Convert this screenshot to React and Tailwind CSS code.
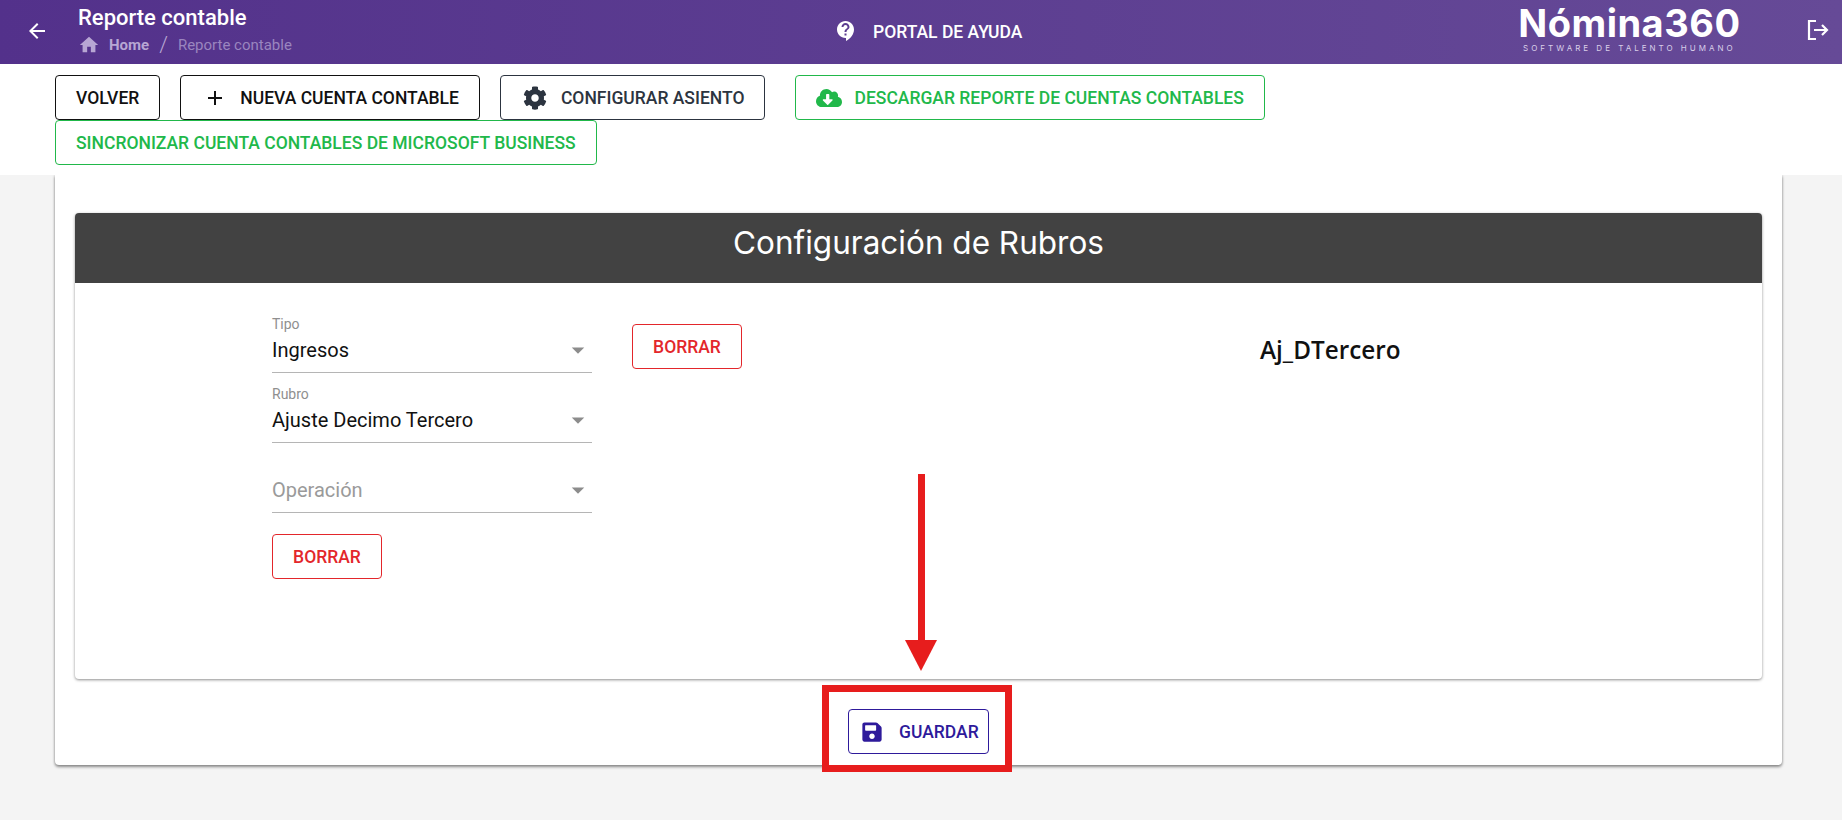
import React from "react";
import { MdArrowBack, MdHome, MdAdd, MdContactSupport, MdArrowDropDown } from "react-icons/md";
import { FaCog, FaCloudDownloadAlt, FaSave } from "react-icons/fa";

const ToolButton = ({ icon, label, className }) => (
  <button
    type="button"
    className={`flex h-[45px] items-center rounded-[4px] border px-[20px] pt-[1px] text-[17.5px] font-medium whitespace-nowrap ${className}`}
  >
    {icon}
    {label}
  </button>
);

const SelectField = ({ label, value }) => (
  <div className="relative h-[70px] w-[320px] border-b border-[#b5b5b5]">
    {label && (
      <span className="absolute top-[13px] left-0 text-[14px] leading-[16px] text-[#8f8f8f]">
        {label}
      </span>
    )}
    {value ? (
      <span className="absolute top-[34px] left-0 text-[20px] leading-[26px] text-[#111]">{value}</span>
    ) : (
      <span className="absolute top-[34px] left-0 text-[20px] leading-[26px] text-[#9a9a9a]">Operación</span>
    )}
    <MdArrowDropDown className="absolute top-[32px] right-[-1px] text-[#8c8c8c]" size={30} />
  </div>
);

const BorrarButton = ({ className }) => (
  <button
    type="button"
    className={`h-[45px] w-[110px] rounded-[4px] border border-[#e3262b] pt-[1px] text-[17.5px] font-medium text-[#e3262b] ${className}`}
  >
    BORRAR
  </button>
);

const App = () => {
  return (
    <div className="relative h-[820px] w-full overflow-hidden bg-[#f4f4f4] font-['Roboto',sans-serif]">
      <header className="flex h-[64px] items-center bg-gradient-to-r from-[#53318b] to-[#664a97] text-white">
        <MdArrowBack className="mb-[3px] ml-[25px]" size={24} />
        <div className="ml-[29px] w-[280px] self-start pt-[4px]">
          <div className="text-[22px] leading-[28px] font-medium">Reporte contable</div>
          <div className="mt-[2px] flex items-center text-[15px] leading-[20px] text-[#b7a6d3]">
            <MdHome size={22} />
            <span className="ml-[9px] font-bold">Home</span>
            <span className="mx-[10px] text-[22px] font-light">/</span>
            <span className="text-[#9a85bf]">Reporte contable</span>
          </div>
        </div>
        <div className="ml-[476px] flex items-center">
          <MdContactSupport className="mb-[3px]" size={24} />
          <span className="ml-[15px] text-[17.5px] font-medium">PORTAL DE AYUDA</span>
        </div>
        <div className="ml-[495px] w-[224px] pb-[9px] text-center">
          <div className="font-['Inter',sans-serif] text-[38px] leading-[42px] font-bold tracking-[0.5px]">Nómina360</div>
          <div className="mt-[-1px] font-['Inter',sans-serif] text-[8px] leading-[10px] tracking-[3px] text-[#d9cfe9]">
            SOFTWARE DE TALENTO HUMANO
          </div>
        </div>
        <svg className="mb-[4px] ml-[65px]" width="24" height="24" viewBox="0 0 24 24" fill="none" stroke="currentColor" strokeWidth="2.2">
          <path d="M10 3H3v18h7" />
          <path d="M8 12h13M16 7l5 5-5 5" />
        </svg>
      </header>

      <div className="relative z-10 flex h-[111px] flex-wrap content-start items-start bg-white pt-[11px] pr-[500px] pl-[55px]">
        <ToolButton label="VOLVER" className="mr-[20px] border-[#111] text-[#111]" />
        <ToolButton
          label="NUEVA CUENTA CONTABLE"
          icon={<MdAdd className="mr-[13px] ml-[2px]" size={24} />}
          className="mr-[20px] border-[#111] text-[#111]"
        />
        <ToolButton
          label="CONFIGURAR ASIENTO"
          icon={<FaCog className="mr-[14px] ml-[2px]" size={24} />}
          className="mr-[30px] border-[#2c3440] text-[#2c3440]"
        />
        <ToolButton
          label="DESCARGAR REPORTE DE CUENTAS CONTABLES"
          icon={<FaCloudDownloadAlt className="mr-[12px]" size={26} />}
          className="border-[#21b84a] text-[#21b84a]"
        />
        <ToolButton
          label="SINCRONIZAR CUENTA CONTABLES DE MICROSOFT BUSINESS"
          className="border-[#21b84a] text-[#21b84a]"
        />
      </div>

      <main className="mx-[55px] w-[1727px] rounded-b-[4px] bg-white px-[20px] pt-[38px] pb-[11px] shadow-[0_2px_3px_rgba(0,0,0,0.4),0_0_3px_rgba(0,0,0,0.2)]">
        <section className="w-[1687px] overflow-hidden rounded-[4px] bg-white shadow-[0_1px_3px_rgba(0,0,0,0.45)]">
          <div className="flex h-[70px] items-center justify-center bg-[#424242] pb-[10px] font-['Inter',sans-serif] text-[31.5px] text-white">
            Configuración de Rubros
          </div>
          <div className="flex h-[396px] items-start pl-[197px]">
            <div className="flex w-[320px] flex-col items-start pt-[20px]">
              <SelectField label="Tipo" value="Ingresos" />
              <SelectField label="Rubro" value="Ajuste Decimo Tercero" />
              <SelectField />
              <BorrarButton className="mt-[21px]" />
            </div>
            <BorrarButton className="mt-[41px] ml-[40px]" />
            <div className="mt-[50px] ml-[518px] font-['Open_Sans',sans-serif] text-[24.3px] leading-[34px] font-semibold text-[#111]">
              Aj_DTercero
            </div>
          </div>
        </section>
        <div className="mt-[30px] flex justify-center">
          <button
            type="button"
            className="flex h-[45px] w-[141px] items-center rounded-[4px] border border-[#2e1a9b] pl-[12px] pt-[1px] text-[17.5px] font-medium text-[#2e1a9b]"
          >
            <FaSave className="mr-[16px]" size={22} />
            GUARDAR
          </button>
        </div>
      </main>

      {/* annotation on top of the screenshot */}
      <div className="absolute top-[474px] left-[918px] h-[170px] w-[7px] bg-[#e71d1d]" />
      <div className="absolute top-[640px] left-[905px] h-0 w-0 border-t-[31px] border-r-[16px] border-l-[16px] border-t-[#e71d1d] border-r-transparent border-l-transparent" />
      <div className="absolute top-[685px] left-[822px] h-[87px] w-[190px] border-[7px] border-[#e71d1d]" />
    </div>
  );
};

export default App;
